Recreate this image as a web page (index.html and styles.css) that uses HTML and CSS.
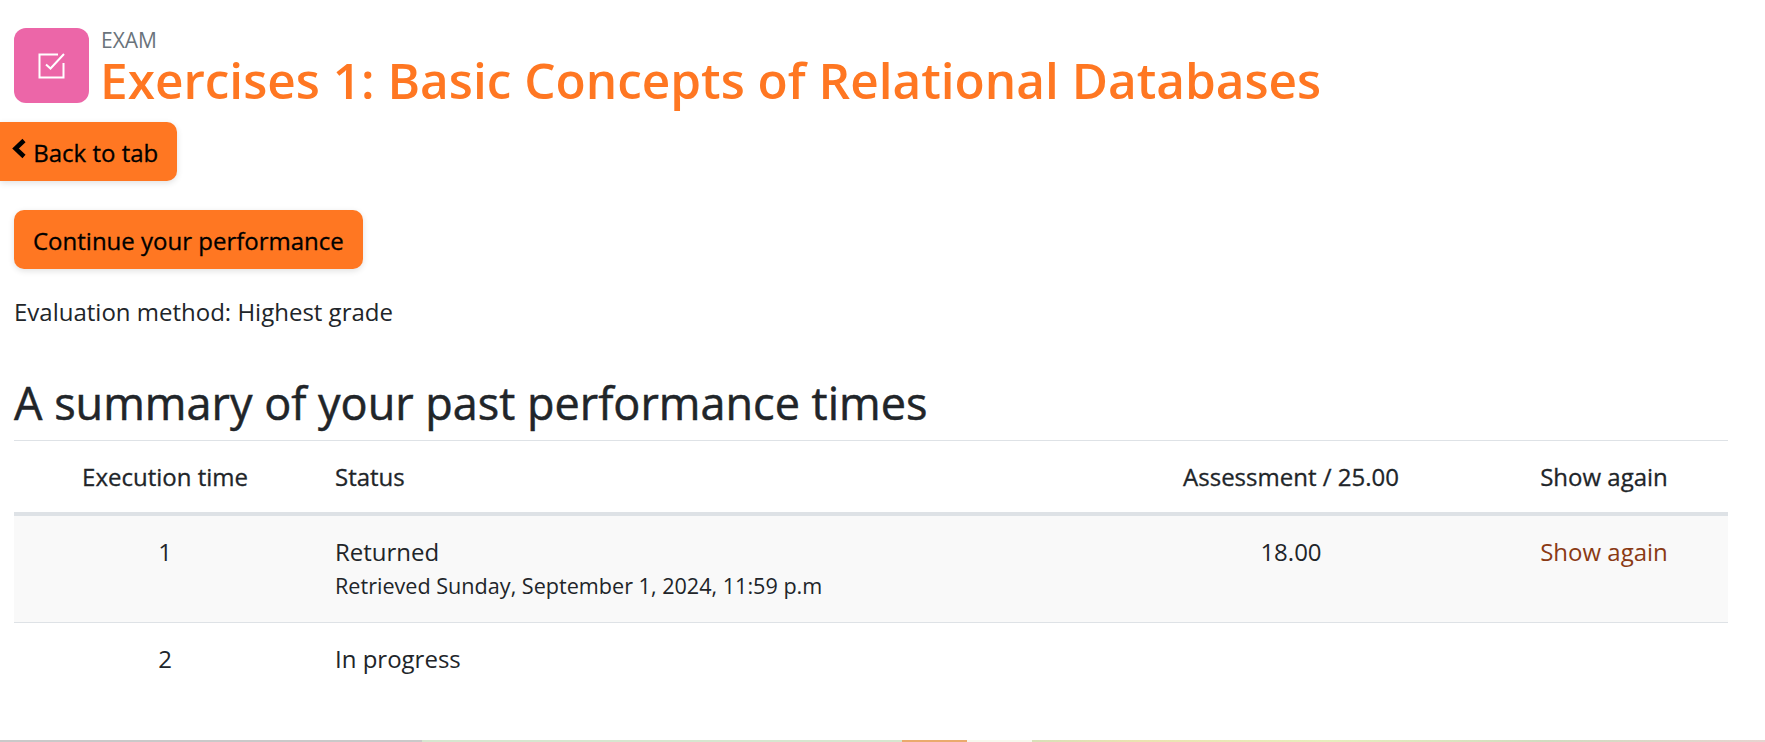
FILE: index.html
```html
<!DOCTYPE html>
<html lang="en">
<head>
  <meta charset="UTF-8">
  <meta name="viewport" content="width=device-width, initial-scale=1.0">
  <link rel="stylesheet" href="styles.css">
  <title>Exercises 1: Basic Concepts of Relational Databases</title>
</head>
<body>

  <main class="page">
    <header class="activity-header">
      <div class="activity-icon">
        <svg width="32" height="32" viewBox="0 0 32 32" fill="none" stroke="#fff" stroke-width="2">
          <path d="M27.500 13v14.500H3.500V4.500H22"/>
          <path d="M10 14.500l4.500 4L28 4"/>
        </svg>
      </div>
      <div class="activity-title">
        <div class="activity-type">EXAM</div>
        <h1>Exercises 1: Basic Concepts of Relational Databases</h1>
      </div>
    </header>

    <a class="btn btn-back" href="#">
      <svg class="chevron" width="14" height="21" viewBox="0 0 14 21" fill="none" stroke="#000" stroke-width="4.500">
        <path d="M12 2.500L3.500 10.500l8.500 8"/>
      </svg>
      Back to tab
    </a>

    <div class="continue-row">
      <a class="btn" href="#">Continue your performance</a>
    </div>

    <p class="method">Evaluation method: Highest grade</p>

    <h2>A summary of your past performance times</h2>

    <table class="summary">
      <thead>
        <tr>
          <th class="col-time">Execution time</th>
          <th class="col-status">Status</th>
          <th class="col-grade">Assessment / 25.00</th>
          <th class="col-review">Show again</th>
        </tr>
      </thead>
      <tbody>
        <tr class="row-shaded">
          <td class="col-time">1</td>
          <td class="col-status">Returned<span class="small">Retrieved Sunday, September 1, 2024, 11:59 p.m</span></td>
          <td class="col-grade">18.00</td>
          <td class="col-review"><a href="#">Show again</a></td>
        </tr>
        <tr>
          <td class="col-time">2</td>
          <td class="col-status">In progress</td>
          <td class="col-grade"></td>
          <td class="col-review"></td>
        </tr>
      </tbody>
    </table>
  </main>

  <div class="bottom-strip">
    <div class="strip-a"></div>
    <div class="strip-b"></div>
    <div class="strip-c"></div>
    <div class="strip-d"></div>
    <div class="strip-e"></div>
  </div>

</body>
</html>
```

FILE: styles.css
```css
html, body {
  height: 100%;
}

body {
  margin: 0;
  font-family: "Open Sans", sans-serif;
  font-size: 24px;
  line-height: 36px;
  color: #212529;
  background-color: #fff;
  display: flex;
  flex-direction: column;
  overflow: hidden;
}

.page {
  flex: 1;
  padding: 28px 37px 0 14px;
}

.activity-header {
  display: flex;
  gap: 12px;
  height: 75px;
}

.activity-icon {
  width: 75px;
  height: 75px;
  border-radius: 12px;
  background-color: #ec66a8;
  display: flex;
  align-items: center;
  justify-content: center;
}

.activity-type {
  font-size: 21px;
  line-height: 24px;
  color: #6a737b;
}

h1 {
  margin: 0 0 0 -1px;
  font-size: 49.500px;
  line-height: 56px;
  font-weight: 600;
  color: #ff7722;
}

.btn {
  display: inline-block;
  background-color: #ff7722;
  color: #000;
  -webkit-text-stroke: 0.300px #000;
  text-decoration: none;
  border-radius: 10px;
  padding: 13px 19px 10px;
  box-shadow: 0 2px 6px rgba(0, 0, 0, 0.12);
}

.btn-back {
  margin: 19px 0 0 -14px;
  padding: 13px 19px 10px 12px;
  border-radius: 0 10px 10px 0;
}

.chevron {
  vertical-align: 3px;
  margin-right: 1px;
}

.continue-row {
  margin-top: 29px;
}

.method {
  margin: 25px 0 0;
}

h2 {
  margin: 47px 0 0;
  font-size: 45px;
  line-height: 52px;
  font-weight: 400;
  -webkit-text-stroke: 0.500px #212529;
}

.summary {
  width: 100%;
  margin-top: 11px;
  border-collapse: collapse;
  border-top: 1px solid #dee2e6;
}

th {
  font-weight: 400;
  -webkit-text-stroke: 0.300px #212529;
  height: 71px;
  padding: 0;
  border-bottom: 4px solid #dee2e6;
}

td {
  padding: 18px 0 21px;
  vertical-align: top;
  border-bottom: 1px solid #dee2e6;
}

tbody tr:last-child td {
  border-bottom: none;
}

.row-shaded td {
  background-color: #f9f9f9;
}

.col-time {
  width: 302px;
  text-align: center;
}

.col-status {
  text-align: left;
  padding-left: 19px;
}

.col-grade {
  width: 378px;
  text-align: center;
}

.col-review {
  width: 248px;
  text-align: center;
}

.col-review a {
  color: #8a3a14;
  text-decoration: none;
}

.small {
  display: block;
  font-size: 21.600px;
  line-height: 31px;
}

.bottom-strip {
  display: flex;
  height: 2px;
}

.strip-a { width: 422px; background-color: #c9c9c9; }
.strip-b { width: 480px; background-color: #d6e6cf; }
.strip-c { width: 65px; background-color: #eaaa6c; }
.strip-d { width: 65px; background-color: #f7f8ee; }
.strip-e { flex: 1; background: linear-gradient(90deg, #d8e0b8, #ebe3b0 15%, #e6eebc 40%, #d0dcc0 70%, #e6d4d0); }
```
